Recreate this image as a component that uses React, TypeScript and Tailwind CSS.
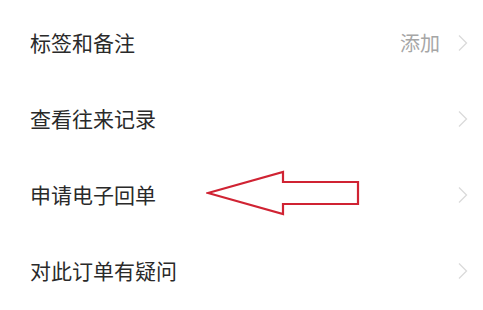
const rows = [
  { label: '标签和备注', value: '添加' },
  { label: '查看往来记录' },
  { label: '申请电子回单', arrow: true },
  { label: '对此订单有疑问' },
];

const Chevron = () => (
  <svg width="12" height="18" viewBox="0 0 12 18" fill="none">
    <path d="M2 1.5 L9.5 9 L2 16.5" stroke="#dadada" strokeWidth="1.3" />
  </svg>
);

const RedArrow = () => (
  <svg width="154" height="46" viewBox="0 0 154 46" fill="none">
    <path
      d="M2 23 L77 2 L77 12 L152 12 L152 34 L77 34 L77 44 Z"
      stroke="#d02333"
      strokeWidth="2.2"
      strokeLinejoin="miter"
    />
  </svg>
);

export default function App() {
  return (
    <div
      className="w-[483px] h-[310px] bg-white pt-[5px] overflow-hidden"
      style={{ fontFamily: '"Noto Sans CJK SC", "Noto Sans", sans-serif' }}
    >
      {rows.map((row) => (
        <div key={row.label} className="relative flex items-center h-[76px] pl-[30px] pr-[14px]">
          <span className="text-[21px] text-[#2a2a2a]">{row.label}</span>
          {row.arrow && (
            <div className="absolute left-[206px] top-[13px]">
              <RedArrow />
            </div>
          )}
          <div className="ml-auto flex items-center gap-[17px]">
            {row.value && <span className="text-[20px] text-[#a6a6a6]">{row.value}</span>}
            <Chevron />
          </div>
        </div>
      ))}
    </div>
  );
}
